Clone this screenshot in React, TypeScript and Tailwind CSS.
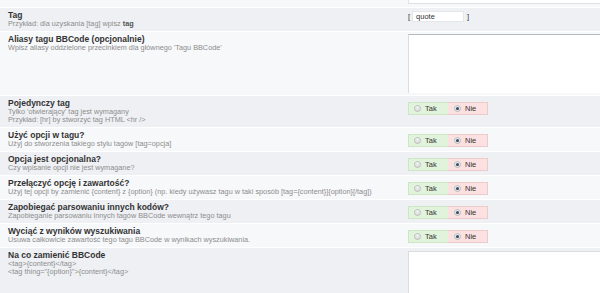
import React from 'react';

type Row = {
  title: string;
  desc: string[];
  kind: 'input' | 'textarea' | 'radio' | 'textarea-tall';
};

const rows: Row[] = [
  { title: 'Tag', desc: ['Przykład: dla uzyskania [tag] wpisz §tag'], kind: 'input' },
  { title: 'Aliasy tagu BBCode (opcjonalnie)', desc: ["Wpisz aliasy oddzielone przecinkiem dla głównego 'Tagu BBCode'"], kind: 'textarea' },
  { title: 'Pojedynczy tag', desc: ["Tylko 'otwierający' tag jest wymagany", 'Przykład: [hr] by stworzyć tag HTML <hr />'], kind: 'radio' },
  { title: 'Użyć opcji w tagu?', desc: ['Użyj do stworzenia takiego stylu tagów [tag=opcja]'], kind: 'radio' },
  { title: 'Opcja jest opcjonalna?', desc: ['Czy wpisanie opcji nie jest wymagane?'], kind: 'radio' },
  { title: 'Przełączyć opcję i zawartość?', desc: ['Użyj tej opcji by zamienić {content} z {option} (np. kiedy używasz tagu w taki sposób [tag={content}]{option}[/tag])'], kind: 'radio' },
  { title: 'Zapobiegać parsowaniu innych kodów?', desc: ['Zapobieganie parsowaniu innych tagów BBCode wewnątrz tego tagu'], kind: 'radio' },
  { title: 'Wyciąć z wyników wyszukiwania', desc: ['Usuwa całkowicie zawartość tego tagu BBCode w wynikach wyszukiwania.'], kind: 'radio' },
  { title: 'Na co zamienić BBCode', desc: ['<tag>{content}</tag>', '<tag thing="{option}">{content}</tag>'], kind: 'textarea-tall' },
];

const font = { fontFamily: '"Liberation Sans", Arial, sans-serif' };

const Radio = ({ checked }: { checked?: boolean }) => (
  <span className="inline-flex h-[7px] w-[7px] items-center justify-center rounded-full border border-[#b9bdb9] bg-gradient-to-b from-[#f4f4f4] to-[#dcdcdc]">
    {checked && <span className="h-[3px] w-[3px] rounded-full bg-[#2f4b63]" />}
  </span>
);

const YesNo = () => (
  <div className="flex h-[13px] w-[80px] text-[7.5px] text-[#333]">
    <div className="flex w-[40px] items-center gap-[4px] border border-r-0 border-[#cfe6c6] bg-[#e2f3dc] pl-[5px]">
      <Radio />
      <span>Tak</span>
    </div>
    <div className="flex w-[40px] items-center gap-[4px] border border-l-0 border-[#efcaca] bg-[#fbe1e1] pl-[6px]">
      <Radio checked />
      <span>Nie</span>
    </div>
  </div>
);

const Desc = ({ text }: { text: string }) => {
  if (text.includes('§')) {
    const [a, b] = text.split('§');
    return (
      <div>
        {a}
        <b className="text-[#555]">{b}</b>
      </div>
    );
  }
  return <div className="whitespace-nowrap">{text}</div>;
};

export default function App() {
  return (
    <div className="h-[293px] w-[600px] overflow-hidden bg-[#f7f8fa]" style={font}>
      <div className="grid h-[8px] grid-cols-[408px_1fr] border-b border-white bg-[#f7f8fa]">
        <div />
        <div className="h-[4px] border-b border-l border-[#dfe1e4] bg-white" />
      </div>
      {rows.map((row, i) => (
        <div
          key={row.title}
          className={`grid grid-cols-[408px_1fr] border-b border-white ${i % 2 === 0 ? 'bg-[#eef0f3]' : 'bg-[#f7f8fa]'}`}
        >
          <div className="min-w-0 pb-[3px] pl-[8px] pt-[3px]">
            <div className="text-[8.5px] font-bold leading-[9px] text-[#333]">{row.title}</div>
            <div className="text-[7.3px] leading-[8px] text-[#8d8d8d]">
              {row.desc.map((d) => (
                <Desc key={d} text={d} />
              ))}
            </div>
          </div>
          <div className="min-w-0">
            {row.kind === 'input' && (
              <div className="flex items-center gap-[2px] pt-[3px] text-[7.5px] text-[#333]">
                <span>[</span>
                <div className="h-[11px] w-[52px] border border-[#e4e6e9] bg-white pl-[3px] leading-[9px]">quote</div>
                <span className="pl-[1px]">]</span>
              </div>
            )}
            {row.kind === 'textarea' && (
              <div className="py-[2px]">
                <div className="h-[59px] border-l border-t border-[#b5b8bc] border-l-[#dadcdf] bg-white" />
              </div>
            )}
            {row.kind === 'radio' && (
              <div className="pt-[6px]">
                <YesNo />
              </div>
            )}
            {row.kind === 'textarea-tall' && (
              <div className="pt-[3px]">
                <div className="h-[60px] border-l border-t border-[#dadcdf] bg-white" />
              </div>
            )}
          </div>
        </div>
      ))}
    </div>
  );
}
